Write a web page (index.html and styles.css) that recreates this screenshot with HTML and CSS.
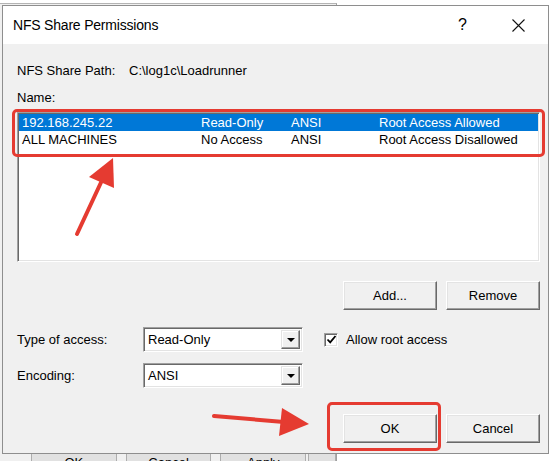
FILE: index.html
```html
<!DOCTYPE html>
<html lang="en">

<head>
    <meta charset="UTF-8">
    <title>NFS Share Permissions</title>
    <link rel="stylesheet" href="styles.css">
</head>

<body>
    <div class="desktop">

        <!-- the properties window behind the dialog -->
        <div class="back-window">
            <div class="back-buttons">
                <span class="back-btn">OK</span>
                <span class="back-btn">Cancel</span>
                <span class="back-btn">Apply</span>
                <span class="back-btn back-btn-small"></span>
            </div>
        </div>

        <div class="dialog">
            <div class="titlebar">
                <span class="title">NFS Share Permissions</span>
                <span class="title-help">?</span>
                <svg class="title-close" width="13" height="13" viewBox="0 0 13 13">
                    <path d="M0.5 0.5 L12.5 12.5 M12.5 0.5 L0.5 12.5" stroke="#111" stroke-width="1.1" fill="none" />
                </svg>
            </div>

            <div class="dialog-body">
                <div class="path-row">
                    <span class="path-label">NFS Share Path:</span>
                    <span class="path-value">C:\log1c\Loadrunner</span>
                </div>
                <div class="name-label">Name:</div>

                <div class="listbox">
                    <div class="list-row selected">
                        <span class="col-name">192.168.245.22</span>
                        <span class="col-access">Read-Only</span>
                        <span class="col-enc">ANSI</span>
                        <span class="col-root">Root Access Allowed</span>
                    </div>
                    <div class="list-row">
                        <span class="col-name">ALL MACHINES</span>
                        <span class="col-access">No Access</span>
                        <span class="col-enc">ANSI</span>
                        <span class="col-root">Root Access Disallowed</span>
                    </div>
                </div>

                <div class="button-row list-buttons">
                    <button class="btn">Add...</button>
                    <button class="btn">Remove</button>
                </div>

                <div class="field-row">
                    <span class="field-label">Type of access:</span>
                    <div class="combo">
                        <span class="combo-value">Read-Only</span>
                        <span class="combo-arrow"><i></i></span>
                    </div>
                    <div class="check">
                        <span class="check-box">
                            <svg width="11" height="11" viewBox="0 0 11 11">
                                <path d="M1.5 5.5 L4.2 8.3 L9.5 2" stroke="#000" stroke-width="1.8" fill="none" />
                            </svg>
                        </span>
                        <span>Allow root access</span>
                    </div>
                </div>

                <div class="field-row encoding-row">
                    <span class="field-label">Encoding:</span>
                    <div class="combo">
                        <span class="combo-value">ANSI</span>
                        <span class="combo-arrow"><i></i></span>
                    </div>
                </div>

                <div class="button-row dialog-actions">
                    <button class="btn">OK</button>
                    <button class="btn">Cancel</button>
                </div>
            </div>
        </div>

        <!-- red annotations drawn over the screenshot -->
        <div class="callout callout-list"></div>
        <div class="callout callout-ok"></div>
        <svg class="arrows" width="555" height="461" viewBox="0 0 555 461">
            <line x1="77" y1="234" x2="104" y2="176" stroke="#e53b31" stroke-width="4" stroke-linecap="round" />
            <polygon points="113,158 89,177 114,188" fill="#e53b31" />
            <line x1="214" y1="416" x2="284" y2="422" stroke="#e53b31" stroke-width="4" stroke-linecap="round" />
            <polygon points="309,424 282,408 279,436" fill="#e53b31" />
        </svg>
    </div>
</body>

</html>
```

FILE: styles.css
```css
* {
    margin: 0;
    padding: 0;
    box-sizing: border-box;
}

body {
    background: #fff;
    font-family: "Liberation Sans", Arial, sans-serif;
    font-size: 13px;
    color: #000;
}

.desktop {
    width: 555px;
    height: 461px;
    position: relative;
    overflow: hidden;
    background: #fff;
}

/* window behind */
.back-window {
    position: absolute;
    left: 0;
    top: 3px;
    width: 337px;
    height: 470px;
    background: #f0f0f0;
    border-top: 1px solid #b4b4b4;
    border-right: 1px solid #a0a0a0;
}

.back-buttons {
    display: flex;
    gap: 9px;
    padding-left: 31px;
    margin-top: 449px;
}

.back-btn {
    width: 86px;
    height: 24px;
    border: 1px solid #adadad;
    background: #e1e1e1;
    text-align: center;
    line-height: 18px;
    font-size: 13px;
}

.back-btn-small {
    width: 28px;
    margin-left: -7px;
}

/* dialog */
.dialog {
    position: absolute;
    left: 2px;
    top: 5px;
    width: 547px;
    height: 449px;
    border: 1px solid #8e8e8e;
    background: #f0f0f0;
    display: flex;
    flex-direction: column;
}

.titlebar {
    height: 38px;
    background: #fff;
    display: flex;
    align-items: center;
    padding-left: 10px;
}

.title {
    font-family: "Liberation Sans", Arial, sans-serif;
    font-size: 14px;
    letter-spacing: -0.2px;
    color: #000;
    flex: 1;
}

.title-help {
    font-size: 16px;
    margin-right: 45px;
}

.title-close {
    margin-right: 23px;
}

.dialog-body {
    flex: 1;
    padding: 19px 8px 0 14px;
}

.path-row {
    display: flex;
    line-height: 16px;
}

.path-label {
    width: 112px;
}

.name-label {
    line-height: 16px;
    margin-top: 11px;
}

.listbox {
    margin-top: 6px;
    width: 523px;
    height: 150px;
    background: #fff;
    border: 1px solid;
    border-color: #a0a0a0 #fff #fff #a0a0a0;
    box-shadow: inset 1px 1px 0 #696969, inset -1px -1px 0 #e3e3e3;
    padding: 1px;
}

.list-row {
    display: flex;
    height: 17px;
    line-height: 17px;
    padding-left: 3px;
    white-space: nowrap;
}

.list-row.selected {
    background: #0078d7;
    color: #fff;
}

.col-name {
    width: 179px;
}

.col-access {
    width: 90px;
}

.col-enc {
    width: 88px;
}

.button-row {
    display: flex;
    justify-content: flex-end;
    gap: 9px;
}

.list-buttons {
    margin-top: 19px;
}

.btn {
    width: 94px;
    height: 29px;
    font-family: "Liberation Sans", Arial, sans-serif;
    font-size: 13px;
    color: #000;
    background: #f0f0f0;
    border: 1px solid;
    border-color: #fff #696969 #696969 #fff;
    box-shadow: inset -1px -1px 0 #a0a0a0, inset 1px 1px 0 #e3e3e3;
}

.field-row {
    display: flex;
    align-items: center;
    margin-top: 17px;
    height: 25px;
}

.encoding-row {
    margin-top: 11px;
}

.field-label {
    width: 126px;
}

.combo {
    width: 160px;
    height: 25px;
    background: #fff;
    border: 1px solid;
    border-color: #a0a0a0 #fff #fff #a0a0a0;
    box-shadow: inset 1px 1px 0 #696969, inset -1px -1px 0 #e3e3e3;
    padding: 2px;
    display: flex;
    align-items: center;
}

.combo-value {
    flex: 1;
    padding-left: 2px;
}

.combo-arrow {
    width: 19px;
    height: 19px;
    background: #f0f0f0;
    border: 1px solid;
    border-color: #e3e3e3 #696969 #696969 #e3e3e3;
    box-shadow: inset -1px -1px 0 #a0a0a0, inset 1px 1px 0 #fff;
    display: flex;
    align-items: center;
    justify-content: center;
}

.combo-arrow i {
    width: 0;
    height: 0;
    border-left: 4px solid transparent;
    border-right: 4px solid transparent;
    border-top: 4px solid #000;
}

.check {
    display: flex;
    align-items: center;
    margin-left: 21px;
    gap: 8px;
}

.check-box {
    width: 14px;
    height: 14px;
    background: #fff;
    border: 1px solid;
    border-color: #a0a0a0 #fff #fff #a0a0a0;
    box-shadow: inset 1px 1px 0 #696969, inset -1px -1px 0 #e3e3e3;
    display: flex;
    align-items: center;
    justify-content: center;
}

.check-box svg {
    display: block;
}

.dialog-actions {
    margin-top: 26px;
}

/* annotations */
.callout {
    position: absolute;
    border: 3px solid #e53b31;
    border-radius: 5px;
}

.callout-list {
    left: 12px;
    top: 109px;
    width: 533px;
    height: 48px;
}

.callout-ok {
    left: 327px;
    top: 402px;
    width: 114px;
    height: 49px;
}

.arrows {
    position: absolute;
    left: 0;
    top: 0;
    pointer-events: none;
}
```
